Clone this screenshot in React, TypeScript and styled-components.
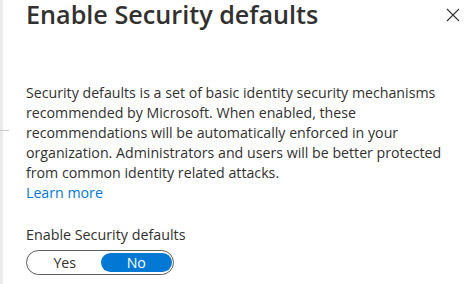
import React from "react";
import styled, { createGlobalStyle } from "styled-components";

const GlobalStyle = createGlobalStyle`
  html, body {
    margin: 0;
    padding: 0;
    background: #ffffff;
  }
  body {
    font-family: "Open Sans", "Noto Sans", sans-serif;
    color: #323130;
  }
`;

const Page = styled.div`
  width: 470px;
  height: 284px;
  display: flex;
  overflow: hidden;
  background: #fff;
`;

const EdgeStrip = styled.div`
  width: 3px;
  flex-shrink: 0;
  background: #ebebeb;
  position: relative;
`;

const EdgeTick = styled.div`
  position: absolute;
  left: 0;
  top: 130px;
  width: 9px;
  height: 1px;
  background: #c8c8c8;
`;

const Panel = styled.div`
  flex: 1;
  padding: 0 0 0 23px;
  display: flex;
  flex-direction: column;
`;

const Header = styled.div`
  display: flex;
  align-items: flex-start;
  justify-content: space-between;
  height: 62px;
  padding-top: 1px;
  box-sizing: border-box;
`;

const Title = styled.h1`
  margin: 0;
  font-size: 25.2px;
  font-weight: 600;
  line-height: 26px;
  color: #323130;
`;

const CloseButton = styled.button`
  border: none;
  background: transparent;
  padding: 0;
  margin: 7px 10px 0 0;
  width: 14px;
  height: 14px;
  display: flex;
  cursor: pointer;
`;

const Description = styled.p`
  margin: 21px 0 0 0;
  font-size: 14.2px;
  line-height: 20px;
  color: #323130;
  white-space: nowrap;
`;

const LearnMore = styled.a`
  display: block;
  font-size: 14.2px;
  line-height: 20px;
  color: #0078d4;
  text-decoration: none;
`;

const Field = styled.div`
  margin-top: 22px;
  display: flex;
  flex-direction: column;
  gap: 5px;
`;

const Label = styled.div`
  font-size: 14.3px;
  line-height: 20px;
  color: #323130;
`;

const Toggle = styled.div`
  width: 148px;
  height: 25px;
  box-sizing: border-box;
  border: 1px solid #605e5c;
  border-radius: 13px;
  display: flex;
  padding: 2px 1px 2px 2px;
`;

const Option = styled.button<{ $active?: boolean }>`
  flex: 1;
  border: none;
  border-radius: 10px;
  font-family: inherit;
  font-size: 14.2px;
  line-height: 19px;
  padding: 0;
  cursor: pointer;
  background: ${(p) => (p.$active ? "#0078d4" : "transparent")};
  color: ${(p) => (p.$active ? "#ffffff" : "#323130")};
`;

export default function App() {
  return (
    <Page>
      <GlobalStyle />
      <EdgeStrip>
        <EdgeTick />
      </EdgeStrip>
      <Panel>
        <Header>
          <Title>Enable Security defaults</Title>
          <CloseButton aria-label="Close">
            <svg width="14" height="14" viewBox="0 0 14 14">
              <path d="M1 1 L13 13 M13 1 L1 13" stroke="#323130" strokeWidth="1.1" fill="none" />
            </svg>
          </CloseButton>
        </Header>
        <Description>
          Security defaults is a set of basic identity security mechanisms
          <br />
          recommended by Microsoft. When enabled, these
          <br />
          recommendations will be automatically enforced in your
          <br />
          organization. Administrators and users will be better protected
          <br />
          from common identity related attacks.
        </Description>
        <LearnMore href="#">Learn more</LearnMore>
        <Field>
          <Label>Enable Security defaults</Label>
          <Toggle>
            <Option>Yes</Option>
            <Option $active>No</Option>
          </Toggle>
        </Field>
      </Panel>
    </Page>
  );
}
